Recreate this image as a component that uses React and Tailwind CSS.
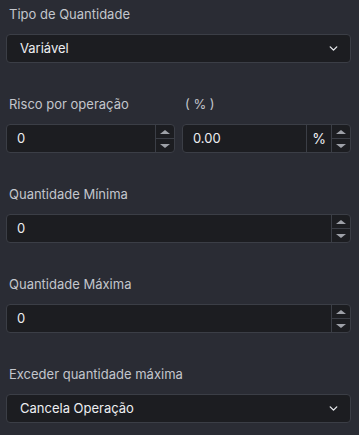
import { ChevronDown } from 'lucide-react'

const font = { fontFamily: 'Inter, "Noto Sans", sans-serif' }

function Label({ children }) {
  return <div className="h-5 leading-5 text-[13px] text-[#c3c6cc] pl-[3px] mb-[10px]">{children}</div>
}

function Spinner() {
  return (
    <div className="w-[19px] flex flex-col border-l border-[#3b3e46]">
      <div className="flex-1 flex items-center justify-center border-b border-[#3b3e46]">
        <span className="block w-0 h-0 border-l-[5px] border-r-[5px] border-b-[4px] border-l-transparent border-r-transparent border-b-[#9ea1a8]" />
      </div>
      <div className="flex-1 flex items-center justify-center">
        <span className="block w-0 h-0 border-l-[5px] border-r-[5px] border-t-[4px] border-l-transparent border-r-transparent border-t-[#9ea1a8]" />
      </div>
    </div>
  )
}

function Select({ value }) {
  return (
    <div className="h-[29px] flex items-center justify-between rounded-[4px] border border-[#3b3e46] bg-[#1c1d21] pl-[13px] pr-[10px]">
      <span className="text-[13px] text-[#eceef1]">{value}</span>
      <ChevronDown size={13} strokeWidth={2.6} className="text-[#e5e7eb]" />
    </div>
  )
}

function NumberInput({ value, addon }) {
  return (
    <div className="h-[29px] flex rounded-[4px] border border-[#3b3e46] bg-[#1c1d21] overflow-hidden">
      <div className="flex-1 flex items-center pl-[10px] text-[13px] text-[#eceef1]">{value}</div>
      {addon && (
        <div className="w-[25px] flex items-center justify-center border-l border-[#3b3e46] text-[14px] text-[#eceef1]">{addon}</div>
      )}
      <Spinner />
    </div>
  )
}

export default function App() {
  return (
    <div className="w-[359px] h-[435px] bg-[#2a2c34] pl-[6px] pr-[8px] pt-[4px]" style={font}>
      <div className="mb-[31px]">
        <Label>Tipo de Quantidade</Label>
        <Select value="Variável" />
      </div>

      <div className="mb-[31px] grid grid-cols-2 gap-x-[7px]">
        <div>
          <Label>Risco por operação</Label>
          <NumberInput value="0" />
        </div>
        <div>
          <Label>( % )</Label>
          <NumberInput value="0.00" addon="%" />
        </div>
      </div>

      <div className="mb-[31px]">
        <Label>Quantidade Mínima</Label>
        <NumberInput value="0" />
      </div>

      <div className="mb-[31px]">
        <Label>Quantidade Máxima</Label>
        <NumberInput value="0" />
      </div>

      <div>
        <Label>Exceder quantidade máxima</Label>
        <Select value="Cancela Operação" />
      </div>
    </div>
  )
}
